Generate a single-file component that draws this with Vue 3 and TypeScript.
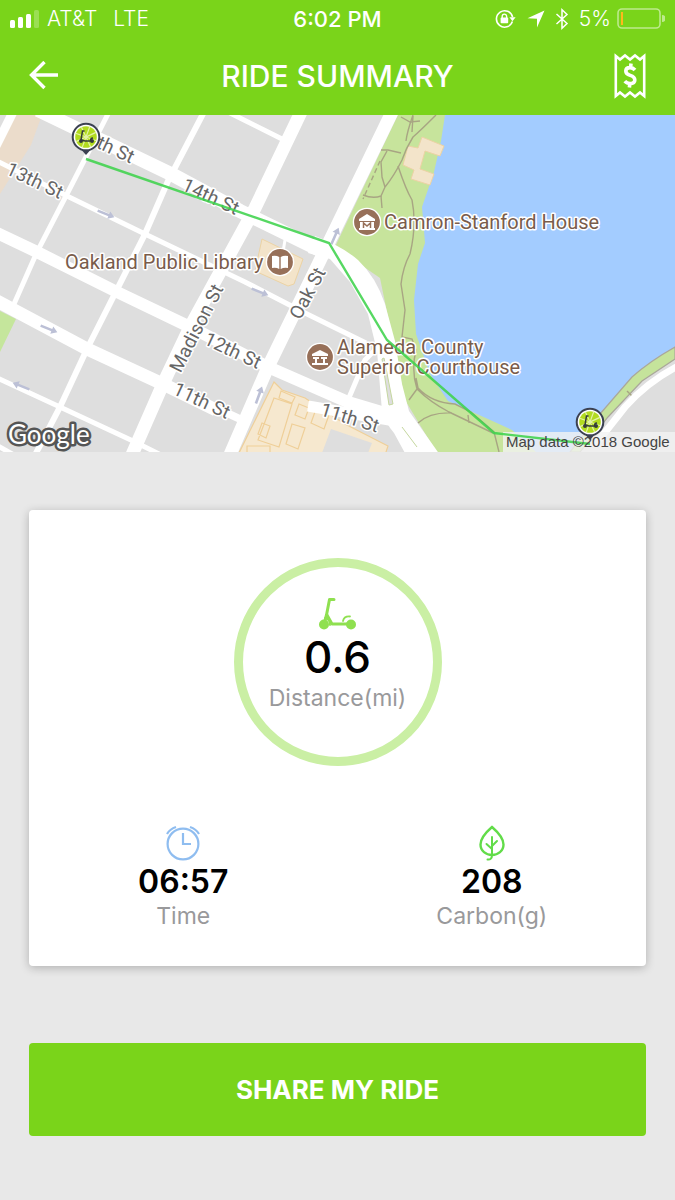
<script setup lang="ts">
interface MapLabel {
  text: string
  x: number
  y: number
  angle: number
}

interface Road {
  d: string
  width: number
}

const roads: Road[] = [
  { d: 'M38 110 L175 176 L240 211 L322 251', width: 14 },
  { d: 'M-5 160 L67 196 L145 234 L245 282 L307 314 L366 343', width: 5 },
  { d: 'M-5 232 L37 252 L117 292 L190 327 L268 367 L348 402 L395 416', width: 12 },
  { d: 'M308 406 L395 421', width: 11 },
  { d: 'M-5 300 L87 349 L163 384 L216 410', width: 13 },
  { d: 'M210 405 L242 420', width: 8 },
  { d: 'M-5 377 L60 407 L133 441 L165 457', width: 5 },
  { d: 'M-2 446 L14 455', width: 5 },
  { d: 'M110 110 L67 194 L37 252 L14 304', width: 5 },
  { d: 'M205 110 L168 181 L145 234 L87 349 L60 407 L34 457', width: 6 },
  { d: 'M302 110 L255 208 L190 327 L163 384 L131 457', width: 13 },
  { d: 'M393 110 L330 240 L268 367 L229 457', width: 13 },
  { d: 'M14 110 L-6 150', width: 9 },
  { d: 'M226 111 L284 140', width: 5 },
  { d: 'M348 400 L365 360 L385 340', width: 5 },
  { d: 'M285 240 L283 252', width: 3 },
  { d: 'M680 365 Q648 381 625 407 L595 445', width: 7 },
]

const arrows: { x: number; y: number; angle: number }[] = [
  { x: 106, y: 214, angle: 22 },
  { x: 49, y: 329, angle: 22 },
  { x: 21, y: 386, angle: 202 },
  { x: 260, y: 292, angle: 22 },
  { x: 335, y: 236, angle: -66 },
  { x: 259, y: 395, angle: -70 },
]

const streets: MapLabel[] = [
  { text: 'th St', x: 116, y: 149, angle: 25 },
  { text: '13th St', x: 35, y: 180, angle: 25 },
  { text: '14th St', x: 211, y: 196, angle: 25 },
  { text: '12th St', x: 233, y: 350, angle: 25 },
  { text: '11th St', x: 202, y: 400, angle: 25 },
  { text: '11th St', x: 350, y: 417, angle: 17 },
  { text: 'Oak St', x: 307, y: 293, angle: -62 },
  { text: 'Madison St', x: 196, y: 328, angle: -63 },
]

const pins = [
  { x: 86, y: 137 },
  { x: 590, y: 422 },
]

const wedges = [0, 45, 90, 135]
</script>

<template>
  <div class="screen">
    <header class="top">
      <div class="status">
        <div class="side">
          <svg class="signal" viewBox="0 0 31 18" aria-hidden="true">
            <rect x="0" y="10" width="5" height="8" rx="1.5" />
            <rect x="8" y="7" width="5" height="11" rx="1.5" />
            <rect x="16" y="4" width="5" height="14" rx="1.5" />
            <rect x="24" y="0" width="5" height="18" rx="1.5" opacity=".25" />
          </svg>
          <span>AT&amp;T</span>
          <span class="network">LTE</span>
        </div>
        <span class="clock">6:02 PM</span>
        <div class="side right">
          <svg class="lock" viewBox="0 0 21 20" aria-hidden="true">
            <path d="M17.4 12.6A8.2 8.2 0 1 1 17.6 8" fill="none" stroke="#fff" stroke-width="1.6" />
            <path d="M14.4 8.3h6.2l-3.1 4z" />
            <rect x="5.6" y="8.6" width="7.6" height="5.6" rx=".8" />
            <path d="M7.2 9V7.3a2.2 2.2 0 0 1 4.4 0V9" fill="none" stroke="#fff" stroke-width="1.4" />
          </svg>
          <svg class="location" viewBox="0 0 18 18" aria-hidden="true">
            <path d="M17.5 .5L10 17.5V8.7L.5 8.2z" />
          </svg>
          <svg class="bluetooth" viewBox="0 0 14 22" aria-hidden="true">
            <path d="M1.5 6L12 15.5L7 20.2V1.8L12 6.5L1.5 16" fill="none" stroke="#fff" stroke-width="1.5" />
          </svg>
          <span>5%</span>
          <svg class="battery" viewBox="0 0 48 22" aria-hidden="true">
            <rect x="1" y="1" width="42" height="19" rx="4" fill="none" stroke="#fff" stroke-width="1.6" opacity=".5" />
            <rect x="4" y="4" width="2" height="13" fill="#ffb81c" />
            <path d="M45 7a3.5 3.5 0 0 1 0 7z" opacity=".5" />
          </svg>
        </div>
      </div>
      <nav class="bar">
        <button class="icon-button" type="button" aria-label="Back">
          <svg class="back" viewBox="0 0 30 30" aria-hidden="true">
            <path d="M15.5 1L2.500 14L15.500 27M2.500 14H29" fill="none" stroke="#fff" stroke-width="3.4" />
          </svg>
        </button>
        <h1>RIDE SUMMARY</h1>
        <button class="icon-button" type="button" aria-label="Receipt">
          <svg class="receipt" viewBox="0 0 32 46" aria-hidden="true">
            <path
              d="M1.8 3L6 6.5L11 2.5L16 6.5L21 2.5L26 6.5L30.2 3V43L26 39.5L21 43.5L16 39.5L11 43.5L6 39.5L1.8 43Z"
              fill="none" stroke="#fff" stroke-width="2.6"
            />
            <path
              d="M21 17Q19 14.6 16 14.6Q11.8 14.6 11.8 18Q11.8 21 16.2 22.4Q20.8 23.8 20.8 27Q20.8 30.6 16 30.6Q12.8 30.6 10.8 28.2M17 10.5L16.600 14.500M15.800 30.500L15.400 34.500"
              fill="none" stroke="#fff" stroke-width="3.6"
            />
          </svg>
        </button>
      </nav>
    </header>

    <svg class="map" viewBox="0 115 675 337" role="img" aria-label="Ride route map">
      <rect x="0" y="115" width="675" height="337" fill="#dedede" />
      <path d="M12 115H42L31 145L0 194V140Z" fill="#ebdccb" />
      <path d="M0 311L16 319L0 352Z" fill="#c5e69c" />

      <path d="M262 239L303 259L294 284L288 286L255 271Z" fill="#f3e4ca" stroke="#ecd3a4" />
      <g fill="#f6e8cf" stroke="#efcf98" stroke-width="1.2">
        <path d="M274 382L282 390L305 398L345 424L388 446L385 455H238Z" />
        <path d="M274 398L292 404L279 447L258 440ZM281 391L295 397L292 403L279 398ZM299 404L309 408L305 419L295 415ZM262 423L270 426L266 438L258 434ZM316 409L329 415L324 429L311 423ZM292 424L305 428L298 449L286 444ZM247 446H270V454H247Z" />
      </g>
      <path d="M331 429L372 443L368 453H322Z" fill="#dedede" />

      <path d="M398 115H460V350L545 455H438L405 400L380 278L335 247Z" fill="#c7e49c" />
      <path
        d="M445 115L441 141L434 172L422 207L425 243L418 264L414 300L416 334L430 374L448 401L488 419L512 430L536 452H572L600 414L632 377Q650 361 675 347V115Z"
        fill="#a3ccff"
      />
      <path d="M675 347Q650 361 632 377L600 414L570 452H580L608 417L642 381L675 359Z" fill="#c5e39b" stroke="#aaa79a" stroke-width="1.2" />
      <path d="M422 137L444 146L440 156L425 151L420 169L434 174L430 185L411 179L414 170L403 165L408 146L418 148Z" fill="#f3e4ca" stroke="#ecd3a4" />

      <g fill="none" stroke="#a8a583" stroke-width="1.4">
        <path d="M436 115Q420 131 413 137Q406 148 402 160Q394 176 385 187L381 196Q373 199 363 195" />
        <path d="M401 117L410 122L420 121M413 115Q407 132 406 141M413 116L412 132M381 150H388L401 153M387 151L381 162L382 177L385 187M381 196L382 208" />
        <path d="M380 161L363 199" stroke-dasharray="5 3" />
        <path d="M398 166Q406 190 412 200Q417 225 410 254Q403 267 401 284L405 310L402 337L412 339L416 350Q411 370 417 389Q430 402 449 412L493 433M417 389L409 400M416 378L418 388Q432 403 455 404L471 412L494 432L499 452M418 423Q430 412 452 413M468 415L469 423" />
        <path d="M627 391L633 397" />
      </g>

      <g fill="none" stroke="#fff">
        <path v-for="(road, i) in roads" :key="i" :d="road.d" :stroke-width="road.width" />
      </g>
      <path
        d="M315 236Q342 246 358 260Q376 277 385 304L395 341L402 384L409 411L440 455H406L394 433Q386 424 382 411L377 351L368 314L350 282L330 259L308 253Z"
        fill="#fff"
      />
      <path d="M384 358L393 404L389 405L382 359ZM402 427L417 447" fill="#dedede" stroke="#c5d79f" />

      <g v-for="(arrow, i) in arrows" :key="i" :transform="`translate(${arrow.x} ${arrow.y}) rotate(${arrow.angle})`">
        <path d="M-9 -1.3H3V-4L9 0L3 4V1.3H-9Z" fill="#bcc0d6" />
      </g>

      <g class="streets">
        <text v-for="(s, i) in streets" :key="i" :transform="`translate(${s.x} ${s.y}) rotate(${s.angle})`" y="7">{{ s.text }}</text>
      </g>

      <g class="places">
        <text x="65" y="269">Oakland Public Library</text>
        <text x="384" y="229">Camron-Stanford House</text>
        <text x="337" y="354">Alameda County</text>
        <text x="337" y="374">Superior Courthouse</text>
      </g>

      <g fill="#977059" stroke="#fff" stroke-width="1.4">
        <circle cx="280" cy="262" r="13.6" />
        <circle cx="367" cy="222" r="13.6" />
        <circle cx="320" cy="357" r="13.6" />
      </g>
      <g fill="#fff">
        <path d="M272 256Q276 255 279.3 257V269Q276 267 272 268ZM288 256Q284 255 280.7 257V269Q284 267 288 268Z" />
        <path d="M367 214L375 219V221H359V219ZM360 222H374V228H375V230H359V228H360Z" />
        <path d="M363.5 228V223L367 226L370.5 223V228" fill="none" stroke="#977059" stroke-width="1.5" />
        <path d="M320 350L328 354V356H312V354ZM313 357H319V359H317V363H315V359H313ZM321 357H327V359H325V363H323V359H321ZM312 363H328V365H312Z" />
      </g>

      <rect x="503" y="432" width="172" height="20" fill="#f2f2f2" opacity=".8" />
      <path d="M86 159L329 243L387 340L494 433L590 444" fill="none" stroke="#3fd34c" stroke-width="2.4" opacity=".88" />

      <g v-for="(pin, i) in pins" :key="i" :transform="`translate(${pin.x} ${pin.y})`">
        <path d="M-7 10L0 18L7 10Z" fill="#3c4152" />
        <circle r="13.3" fill="#fff" stroke="#3c4152" stroke-width="2" />
        <circle r="10.8" fill="#b2db20" />
        <path v-for="w in wedges" :key="w" d="M-11 0H11" stroke="#e4f3a8" stroke-width="1.2" :transform="`rotate(${w + 20})`" />
        <path d="M-1.5 -6H-3.5L-5 3L-1 4H5Q4 1 7 1" fill="none" stroke="#343b3a" stroke-width="1.5" />
        <circle cx="-5" cy="4" r="2" fill="#343b3a" />
        <circle cx="6" cy="4" r="2" fill="#343b3a" />
      </g>

      <text class="copyright" x="506" y="447">Map data ©2018 Google</text>
      <text class="logo" x="8" y="444">Google</text>
    </svg>

    <main class="content">
      <section class="card">
        <div class="ring">
          <svg class="scooter" viewBox="0 0 38 34" aria-hidden="true">
            <g fill="none" stroke="#8fe050" stroke-linecap="round" stroke-linejoin="round">
              <path d="M15 2.5H10.5L7.5 18L5 27" stroke-width="3" />
              <path d="M8 18L13 27H31" stroke-width="3" />
              <path d="M6 21Q11 22 11 28M24 24Q25 19 31 19.5" stroke-width="1.8" />
            </g>
            <circle cx="5" cy="27.5" r="5" fill="#8fe050" />
            <circle cx="32" cy="27.5" r="5" fill="#8fe050" />
          </svg>
          <strong class="distance">0.6</strong>
          <span class="label">Distance(mi)</span>
        </div>
        <div class="stats">
          <div class="stat">
            <svg class="stat-icon" viewBox="0 0 36 36" aria-hidden="true">
              <g fill="none" stroke="#8fbdf0" stroke-width="2.2">
                <circle cx="18" cy="19" r="15.4" />
                <path d="M18 8V19H26" />
                <path d="M2 9Q5 4 11 2M34 9Q31 4 25 2" />
              </g>
            </svg>
            <strong class="value">06:57</strong>
            <span class="label">Time</span>
          </div>
          <div class="stat">
            <svg class="stat-icon" viewBox="0 0 36 36" aria-hidden="true">
              <g fill="none" stroke="#62dc49" stroke-width="2.4" stroke-linecap="round">
                <path d="M18 2Q6.500 12 6.500 19.500C6.500 26 12 30 18 30S29.500 26 29.500 19.500Q29.500 12 18 2Z" />
                <path d="M18 12V30Q18 35 13.500 34.500M18 24L12.500 19M18 21L23 16" stroke-width="2" />
              </g>
            </svg>
            <strong class="value">208</strong>
            <span class="label">Carbon(g)</span>
          </div>
        </div>
      </section>
      <button class="share" type="button">SHARE MY RIDE</button>
    </main>
  </div>
</template>

<style>
body {
  margin: 0;
  background: #e8e8e8;
}
</style>

<style scoped>
.screen {
  min-height: 100vh;
  background: #e8e8e8;
  font-family: Inter, "Liberation Sans", sans-serif;
}

.top {
  background: #7ad41a;
  color: #fff;
}

.status {
  display: grid;
  grid-template-columns: 1fr auto 1fr;
  align-items: center;
  height: 37px;
  padding: 0 10px;
  font-size: 21px;
  font-weight: 300;
}

.status svg {
  fill: #fff;
}

.side {
  display: flex;
  align-items: center;
}

.right {
  justify-content: flex-end;
}

.clock {
  font-size: 22px;
  font-weight: 500;
}

.signal {
  width: 31px;
  height: 18px;
  margin-right: 6px;
}

.network {
  margin-left: 16px;
}

.lock {
  width: 21px;
  height: 20px;
  margin-right: 11px;
}

.location {
  width: 18px;
  height: 18px;
  margin-right: 10px;
}

.bluetooth {
  width: 14px;
  height: 22px;
  margin-right: 10px;
}

.battery {
  width: 48px;
  height: 22px;
  margin-left: 6px;
}

.bar {
  display: flex;
  align-items: center;
  justify-content: space-between;
  height: 78px;
  padding: 0 29px;
}

h1 {
  margin: 0;
  font-size: 30px;
  font-weight: 500;
  line-height: 40px;
}

.icon-button {
  display: flex;
  align-items: center;
  width: 32px;
  height: 48px;
  padding: 0;
  border: 0;
  background: none;
}

.back {
  width: 30px;
  height: 30px;
}

.receipt {
  width: 32px;
  height: 46px;
}

.map {
  display: block;
  width: 100%;
  height: auto;
}

.streets text,
.places text {
  font-family: Roboto, sans-serif;
  stroke: #fff;
  stroke-width: 3px;
  stroke-linejoin: round;
  paint-order: stroke;
}

.streets text {
  font-size: 19px;
  fill: #666;
  text-anchor: middle;
}

.places text {
  font-size: 20px;
  fill: #795c4b;
}

.copyright {
  font-family: "Liberation Sans", sans-serif;
  font-size: 15px;
  fill: #444;
}

.logo {
  font-family: Lato, sans-serif;
  font-size: 26px;
  font-weight: 400;
  fill: #fff;
  stroke: #555;
  stroke-width: 5px;
  stroke-linejoin: round;
  paint-order: stroke;
}

.content {
  padding: 58px 29px 64px;
}

.card {
  padding: 48px 0 36px;
  border-radius: 4px;
  background: #fff;
  box-shadow: 0 2px 10px rgb(0 0 0 / 24%);
}

.ring {
  display: flex;
  flex-direction: column;
  align-items: center;
  box-sizing: border-box;
  width: 208px;
  height: 208px;
  margin: 0 auto;
  padding-top: 30px;
  border: 9px solid #caefa4;
  border-radius: 50%;
}

.scooter {
  width: 38px;
  height: 34px;
}

.distance {
  color: #000;
  font-size: 44px;
  font-weight: 500;
  line-height: 53px;
}

.label {
  color: #99999b;
  font-size: 23px;
  line-height: 28px;
}

.stats {
  display: grid;
  grid-template-columns: 1fr 1fr;
  margin-top: 58px;
}

.stat {
  display: flex;
  flex-direction: column;
  align-items: center;
}

.stat-icon {
  width: 36px;
  height: 38px;
}

.value {
  color: #000;
  font-size: 32px;
  font-weight: 600;
  line-height: 40px;
}

.share {
  display: block;
  width: 100%;
  height: 93px;
  margin-top: 77px;
  border: 0;
  border-radius: 4px;
  background: #7ad41a;
  color: #fff;
  font: 700 26px Inter, "Liberation Sans", sans-serif;
}
</style>
